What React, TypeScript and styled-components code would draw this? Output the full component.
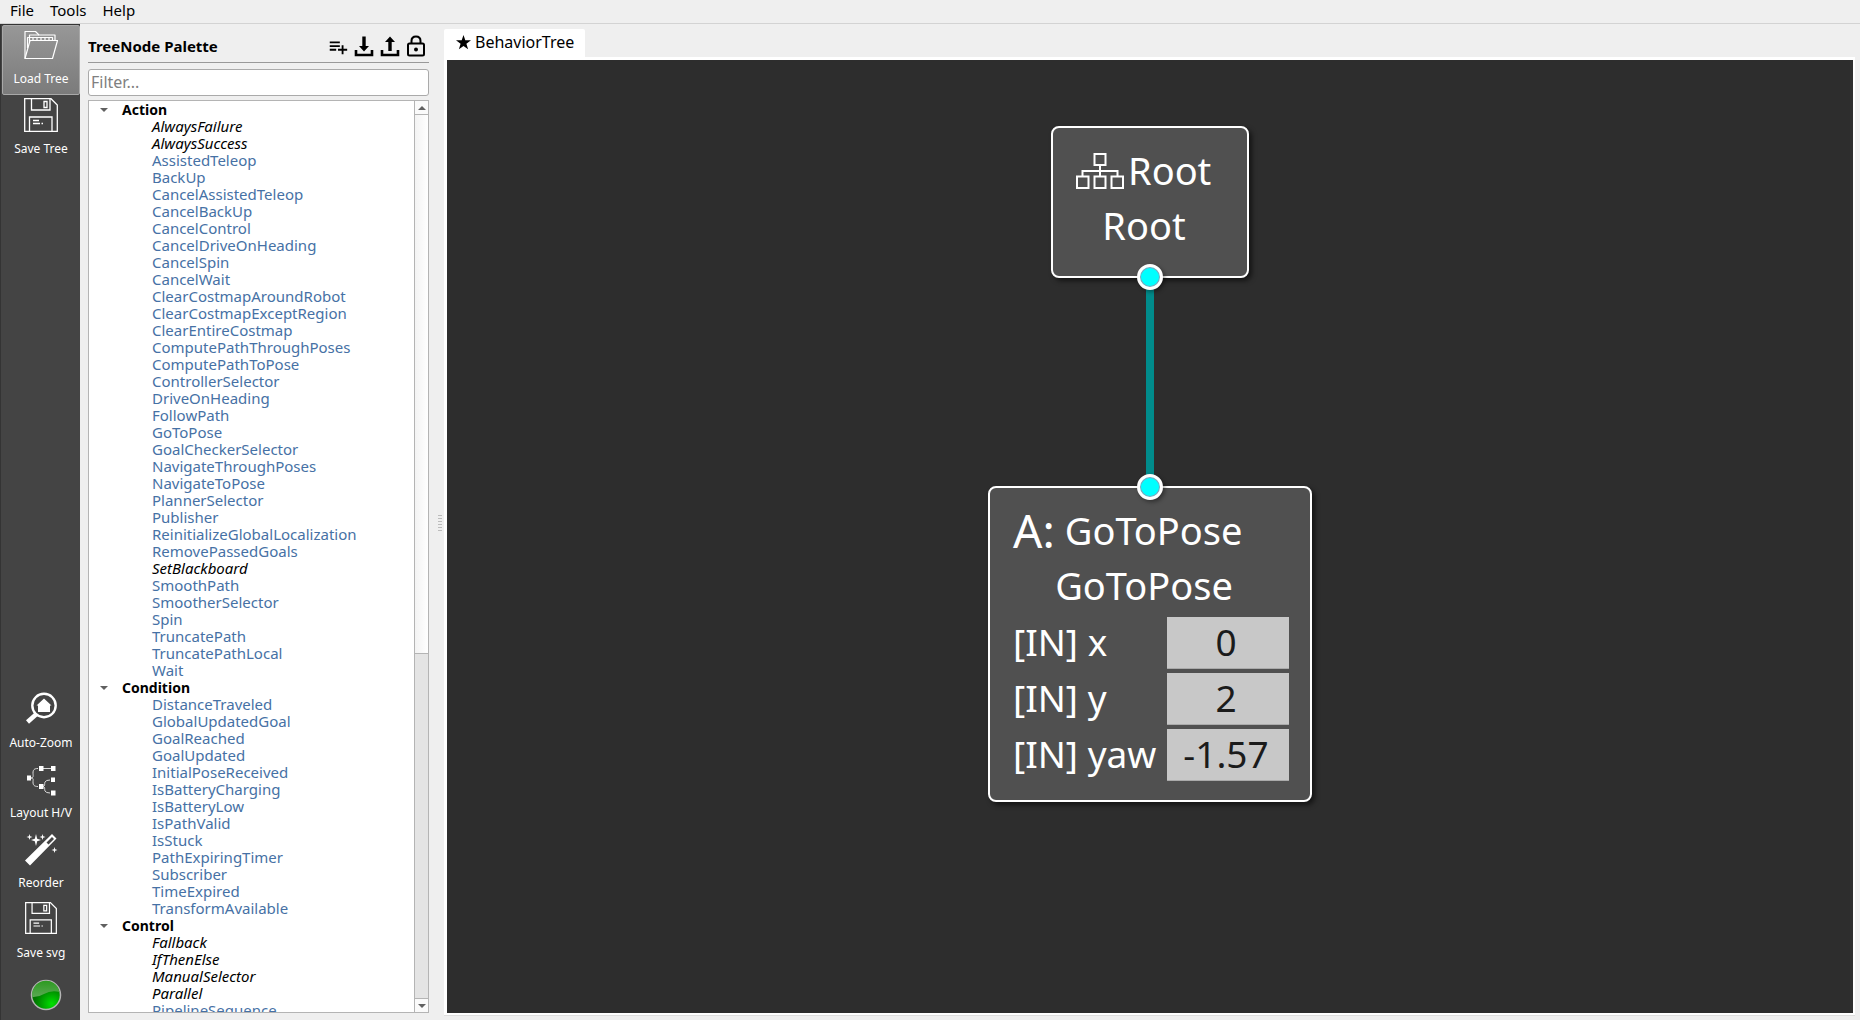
import React from "react";
import styled, { createGlobalStyle } from "styled-components";
import { MdPlaylistAdd } from "react-icons/md";

const GlobalStyle = createGlobalStyle`
  *, *::before, *::after { box-sizing: border-box; }
  body {
    margin: 0;
    background: #efefef;
    color: #000;
    font-family: "Noto Sans", "Open Sans", sans-serif;
    font-size: 15px;
  }
  button, input { font: inherit; color: inherit; }
  button { border: 0; padding: 0; background: none; }
  ul { list-style: none; margin: 0; padding: 0; }
`;

const Window = styled.div`
  display: flex;
  flex-direction: column;
  height: 100vh;
`;

const MenuBar = styled.nav`
  display: flex;
  gap: 16px;
  height: 24px;
  flex: none;
  padding: 0 10px 4px;
  border-bottom: 1px solid #d3d3d3;
`;

const MenuItem = styled.button`
  line-height: 20px;
`;

const Workspace = styled.div`
  display: flex;
  flex: 1;
  min-height: 0;
`;

const ToolBar = styled.aside`
  display: flex;
  flex-direction: column;
  width: 80px;
  flex: none;
  padding: 0 0 9px 1px;
  background: #444;
  border-left: 1px solid #343434;
  border-top: 1px solid #343434;
  color: #fff;
`;

const ToolButton = styled.button<{ $active?: boolean }>`
  display: flex;
  flex-direction: column;
  align-items: center;
  justify-content: space-between;
  height: 70px;
  flex: none;
  padding: 2px 0 7px;
  border: 1px solid ${(p) => (p.$active ? "#a8a8a8" : "transparent")};
  border-radius: 2px;
  background: ${(p) => (p.$active ? "linear-gradient(#979797, #7b7b7b)" : "none")};
  font-size: 12px;
  line-height: 16px;
`;

const ToolSpacer = styled.div`
  flex: 1;
`;

const StatusLed = styled.svg`
  display: block;
  flex: none;
  align-self: center;
  margin: 10px 0 0 10px;
`;

const Palette = styled.section`
  display: flex;
  flex-direction: column;
  width: 349px;
  flex: none;
  padding: 7px 0 7px 8px;
`;

const PaletteHeader = styled.header`
  display: flex;
  align-items: center;
  justify-content: space-between;
  height: 32px;
  flex: none;
  padding: 0 2px 2px 0;
  border-bottom: 1px solid #999;
`;

const PaletteTitle = styled.h1`
  margin: 0;
  font-size: 15px;
  line-height: 20px;
`;

const PaletteActions = styled.div`
  display: flex;
  gap: 4px;
`;

const IconButton = styled.button`
  display: flex;
  width: 22px;
  height: 22px;
`;

const Filter = styled.input`
  height: 27px;
  flex: none;
  margin: 6px 0 4px;
  padding: 0 2px 2px;
  border: 1px solid #aaa;
  border-radius: 3px;
  background: #fff;
  font-size: 16px;
  outline: none;
  &::placeholder { color: #808080; opacity: 1; }
`;

const TreeFrame = styled.div`
  display: flex;
  flex: 1;
  min-height: 0;
  border: 1px solid #b4b4b4;
  background: #fff;
`;

const TreeView = styled.ul`
  flex: 1;
  overflow: hidden;
`;

const Category = styled.button`
  display: flex;
  align-items: center;
  gap: 14px;
  width: 100%;
  height: 17px;
  padding-left: 11px;
  font-size: 14px;
  font-weight: 700;
  line-height: 17px;
`;

const TreeItem = styled.li<{ $builtin: boolean }>`
  height: 17px;
  padding-left: 63px;
  line-height: 17px;
  color: ${(p) => (p.$builtin ? "#000" : "#4671a5")};
  font-style: ${(p) => (p.$builtin ? "italic" : "normal")};
`;

const ScrollBar = styled.div`
  display: flex;
  flex-direction: column;
  width: 14px;
  flex: none;
  border-left: 1px solid #b4b4b4;
  background: #e4e4e4;
`;

const ScrollArrow = styled.button`
  display: flex;
  align-items: center;
  justify-content: center;
  height: 13px;
  flex: none;
  background: #fafafa;
`;

const ScrollThumb = styled.div`
  flex: 538;
  border: solid #b4b4b4;
  border-width: 1px 0;
  background: linear-gradient(90deg, #f3f3f3, #fff);
`;

const ScrollTrack = styled.div`
  flex: 344;
  border-bottom: 1px solid #b4b4b4;
`;

const Splitter = styled.div`
  display: flex;
  align-items: center;
  justify-content: flex-end;
  width: 15px;
  flex: none;
  padding-right: 2px;
`;

const SplitterGrip = styled.div`
  width: 4px;
  height: 17px;
  background: radial-gradient(circle, #bcbcbc 28%, transparent 30%) 0 0 / 2px 3px;
`;

const Editor = styled.main`
  display: flex;
  flex-direction: column;
  flex: 1;
  min-width: 0;
  padding: 5px 5px 5px 0;
`;

const Tab = styled.button`
  display: flex;
  align-items: center;
  align-self: flex-start;
  gap: 4px;
  height: 28px;
  flex: none;
  padding: 0 11px 2px 12px;
  border-radius: 2px 2px 0 0;
  background: #fff;
  font-size: 16px;
`;

const Canvas = styled.div`
  display: flex;
  flex-direction: column;
  align-items: center;
  flex: 1;
  min-height: 0;
  padding-top: 66px;
  border: solid #fff;
  border-width: 3px 2px 2px 3px;
  background: #2d2d2d;
  box-shadow: 0 1px 0 #dedede;
`;

const Node = styled.article`
  position: relative;
  display: flex;
  flex-direction: column;
  padding: 15px 21px 18px 23px;
  border: 2px solid #fff;
  border-radius: 8px;
  background: #505050;
  box-shadow: 3px 3px 5px rgba(0, 0, 0, 0.55);
  color: #fff;
  font-size: 38px;
  line-height: 55px;
`;

const RootNode = styled(Node)`
  width: 198px;
  height: 152px;
`;

const ActionNode = styled(Node)`
  width: 324px;
  height: 316px;
`;

const NodeTitle = styled.div<{ $gap: number }>`
  display: flex;
  align-items: center;
  gap: ${(p) => p.$gap}px;
  height: 55px;
`;

const NodePrefix = styled.span`
  font-size: 46px;
`;

const NodeName = styled.div`
  height: 55px;
  padding-right: 14px;
  text-align: center;
`;

const Port = styled.span<{ $side: "top" | "bottom" }>`
  position: absolute;
  z-index: 1;
  left: 50%;
  ${(p) => p.$side}: -14px;
  width: 26px;
  height: 26px;
  margin-left: -13px;
  border: 3px solid #fff;
  border-radius: 50%;
  background: #00ffff;
  box-shadow: inset 0 0 0 1px #8f9bb5, 2px 2px 4px rgba(0, 0, 0, 0.4);
`;

const Link = styled.div`
  width: 8px;
  height: 208px;
  flex: none;
  background: #008b8b;
`;

const Params = styled.div`
  display: flex;
  flex-direction: column;
  gap: 4px;
  padding-top: 4px;
  font-size: 37px;
`;

const Param = styled.div`
  display: flex;
  align-items: center;
  justify-content: space-between;
  height: 52px;
`;

const ParamLabel = styled.label`
  flex: none;
  padding-bottom: 4px;
  white-space: nowrap;
`;

const ParamInput = styled.input`
  width: 122px;
  height: 52px;
  padding: 0 4px 2px 0;
  border: 0;
  border-bottom: 1px solid #aaa;
  background: #c8c8c8;
  color: #1b1b1b;
  text-align: center;
  outline: none;
`;

const FolderIcon = () => (
  <svg width="34" height="34" viewBox="0 0 34 34" fill="none" stroke="#fff" strokeWidth="1.2" strokeLinejoin="round">
    <path d="M1 30.500V3.500H11.500L15 7H31V13" />
    <path d="M1 30.500L6 12.500H33.500L28.500 30.500Z" />
    <path d="M3.500 20V9.500H28.500V12M5.500 14V7H15" />
    <path d="M9 9.500V12M13 9.500V12M17 9.500V12M21 9.500V12M25 9.500V12" />
  </svg>
);

const FloppyIcon = ({ size }: { size: number }) => (
  <svg width={size} height={size} viewBox="0 0 34 34" fill="none" stroke="#fff" strokeWidth="1.300">
    <path d="M.7.7H27L33.300 7V33.300H.7Z" />
    <path d="M7.500.7V12H26V.7M20 3.500H23V9.500H20ZM5.500 33V19H28V33M9 22.500H15M9 25.500H16M17.500 25.500H19" />
  </svg>
);

const ZoomHomeIcon = () => (
  <svg width="32" height="34" viewBox="0 0 32 34">
    <circle cx="19" cy="13.500" r="11.700" fill="none" stroke="#fff" strokeWidth="2.400" />
    <path d="M11.500 22L2.500 30" stroke="#fff" strokeWidth="4.500" />
    <path d="M19 6.500L26.500 13.500H25V20H13V13.500H11.500Z" fill="#fff" />
  </svg>
);

const LayoutIcon = () => (
  <svg width="34" height="34" viewBox="0 0 34 34">
    <path
      d="M6 16H7C10 16 9 13 9 11C9 8 10 6.500 14 6.500M7 16C10 16 9 18 9 20C9 23 10 24.500 14 24.500M19 6.500H27M18 24.500C22 24.500 20 22 21 20Q22 18 26 18M18 24.500C22 24.500 20 27 21 29Q22 31 26 31"
      fill="none"
      stroke="#ddd"
    />
    <path d="M3 13.500H7V18.500H3ZM15 4H19.500V9H15ZM27 4H31.500V9H27ZM27 15.500H31V20H27ZM15 22H19.500V27H15ZM27 28.500H31.500V33.500H27Z" fill="#fff" />
  </svg>
);

const WandIcon = () => (
  <svg width="34" height="34" viewBox="0 0 34 34" fill="#fff">
    <path d="M1 28.500L28 2L32.500 6.500L6 33.500ZM22.500 10.500L24.500 12.500L30 7L28 5Z" fillRule="evenodd" />
    <path d="M12 2L13.200 6.800L17 8L13.200 9.200L12 14L10.800 9.200L7 8L10.800 6.800ZM5.500 2L6.200 4.300L8.500 5L6.200 5.700L5.500 8L4.800 5.700L2.500 5L4.800 4.300ZM18.500 2L19.200 4.300L21.500 5L19.200 5.700L18.500 8L17.800 5.700L15.500 5L17.800 4.300ZM30.500 15L31.200 17.300L33.500 18L31.200 18.700L30.500 21L29.800 18.700L27.500 18L29.800 17.300Z" />
  </svg>
);

const TransferIcon = ({ up }: { up?: boolean }) => (
  <svg width="22" height="22" viewBox="0 0 22 22">
    <path d="M3 15V20H19V15" fill="none" stroke="#000" strokeWidth="2.600" />
    <path d={up ? "M11 1.500L16 7H12.700V16H9.300V7H6Z" : "M11 16.500L16 11H12.700V1.500H9.300V11H6Z"} />
  </svg>
);

const LockIcon = () => (
  <svg width="22" height="22" viewBox="0 0 22 22" fill="none" stroke="#000" strokeWidth="2">
    <rect x="3" y="8.500" width="16" height="12" rx="1.500" />
    <path d="M6.500 8.500V6Q6.500 1.500 11 1.500T15.500 6V8.500" />
    <circle cx="11" cy="14.500" r="2" fill="#000" stroke="none" />
  </svg>
);

const Triangle = ({ up }: { up?: boolean }) => (
  <svg width="8" height="4" viewBox="0 0 8 4" fill="#606060">
    <path d={up ? "M0 4L4 0L8 4Z" : "M0 0H8L4 4Z"} />
  </svg>
);

const StarIcon = () => (
  <svg width="15" height="15" viewBox="0 0 15 15">
    <path d="M7.500 0L9.300 5.300H15L10.400 8.700L12.100 14.300L7.500 10.900L2.900 14.300L4.600 8.700L0 5.300H5.700Z" />
  </svg>
);

const HierarchyIcon = () => (
  <svg width="48" height="36" viewBox="0 0 48 36" fill="none" stroke="#fff" strokeWidth="2">
    <path d="M18.500 1H29.500V12H18.500ZM1 23.500H12.500V35H1ZM18.500 23.500H29.500V35H18.500ZM35.500 23.500H47V35H35.500ZM24 12V23.500M6.500 23.500V18H41.500V23.500" />
  </svg>
);

const builtins = new Set([
  "AlwaysFailure", "AlwaysSuccess", "SetBlackboard", "Fallback", "IfThenElse", "ManualSelector", "Parallel",
]);

const categories = [
  {
    name: "Action",
    items: [
      "AlwaysFailure", "AlwaysSuccess", "AssistedTeleop", "BackUp", "CancelAssistedTeleop", "CancelBackUp",
      "CancelControl", "CancelDriveOnHeading", "CancelSpin", "CancelWait", "ClearCostmapAroundRobot",
      "ClearCostmapExceptRegion", "ClearEntireCostmap", "ComputePathThroughPoses", "ComputePathToPose",
      "ControllerSelector", "DriveOnHeading", "FollowPath", "GoToPose", "GoalCheckerSelector",
      "NavigateThroughPoses", "NavigateToPose", "PlannerSelector", "Publisher",
      "ReinitializeGlobalLocalization", "RemovePassedGoals", "SetBlackboard", "SmoothPath",
      "SmootherSelector", "Spin", "TruncatePath", "TruncatePathLocal", "Wait",
    ],
  },
  {
    name: "Condition",
    items: [
      "DistanceTraveled", "GlobalUpdatedGoal", "GoalReached", "GoalUpdated", "InitialPoseReceived",
      "IsBatteryCharging", "IsBatteryLow", "IsPathValid", "IsStuck", "PathExpiringTimer", "Subscriber",
      "TimeExpired", "TransformAvailable",
    ],
  },
  { name: "Control", items: ["Fallback", "IfThenElse", "ManualSelector", "Parallel", "PipelineSequence"] },
];

const params = [
  { name: "x", value: "0" },
  { name: "y", value: "2" },
  { name: "yaw", value: "-1.57" },
];

export default function App() {
  return (
    <>
      <GlobalStyle />
      <Window>
        <MenuBar>
          <MenuItem>File</MenuItem>
          <MenuItem>Tools</MenuItem>
          <MenuItem>Help</MenuItem>
        </MenuBar>
        <Workspace>
          <ToolBar>
            <ToolButton $active><FolderIcon />Load Tree</ToolButton>
            <ToolButton><FloppyIcon size={34} />Save Tree</ToolButton>
            <ToolSpacer />
            <ToolButton><ZoomHomeIcon />Auto-Zoom</ToolButton>
            <ToolButton><LayoutIcon />Layout H/V</ToolButton>
            <ToolButton><WandIcon />Reorder</ToolButton>
            <ToolButton><FloppyIcon size={32} />Save svg</ToolButton>
            <StatusLed width="32" height="32" viewBox="0 0 32 32">
              <defs>
                <radialGradient id="led" cx="0.7" cy="0.8" r="0.6">
                  <stop offset="0" stopColor="#00e000" />
                  <stop offset="1" stopColor="#007400" />
                </radialGradient>
                <linearGradient id="shine" x1="0" y1="0" x2="0" y2="1">
                  <stop offset="0" stopColor="#2c9a20" />
                  <stop offset="1" stopColor="#5aa953" />
                </linearGradient>
              </defs>
              <circle cx="16" cy="16" r="14.500" fill="url(#led)" stroke="#b5b5b5" strokeWidth="1.500" />
              <path d="M2.300 18A13.800 13.800 0 0 1 29.500 13Q21 11 14 15Q8 18.500 2.300 18Z" fill="url(#shine)" />
            </StatusLed>
          </ToolBar>
          <Palette>
            <PaletteHeader>
              <PaletteTitle>TreeNode Palette</PaletteTitle>
              <PaletteActions>
                <IconButton aria-label="Add node"><MdPlaylistAdd size={24} /></IconButton>
                <IconButton aria-label="Import palette"><TransferIcon /></IconButton>
                <IconButton aria-label="Export palette"><TransferIcon up /></IconButton>
                <IconButton aria-label="Lock"><LockIcon /></IconButton>
              </PaletteActions>
            </PaletteHeader>
            <Filter type="text" aria-label="Filter" placeholder="Filter..." />
            <TreeFrame>
              <TreeView>
                {categories.map((category) => (
                  <li key={category.name}>
                    <Category><Triangle />{category.name}</Category>
                    <ul>
                      {category.items.map((item) => (
                        <TreeItem key={item} $builtin={builtins.has(item)}>{item}</TreeItem>
                      ))}
                    </ul>
                  </li>
                ))}
              </TreeView>
              <ScrollBar>
                <ScrollArrow aria-label="Scroll up"><Triangle up /></ScrollArrow>
                <ScrollThumb />
                <ScrollTrack />
                <ScrollArrow aria-label="Scroll down"><Triangle /></ScrollArrow>
              </ScrollBar>
            </TreeFrame>
          </Palette>
          <Splitter><SplitterGrip /></Splitter>
          <Editor>
            <Tab><StarIcon />BehaviorTree</Tab>
            <Canvas>
              <RootNode>
                <NodeTitle $gap={4}><HierarchyIcon />Root</NodeTitle>
                <NodeName>Root</NodeName>
                <Port $side="bottom" />
              </RootNode>
              <Link />
              <ActionNode>
                <Port $side="top" />
                <NodeTitle $gap={10}><NodePrefix>A:</NodePrefix>GoToPose</NodeTitle>
                <NodeName>GoToPose</NodeName>
                <Params>
                  {params.map((param) => (
                    <Param key={param.name}>
                      <ParamLabel htmlFor={`port-${param.name}`}>[IN] {param.name}</ParamLabel>
                      <ParamInput id={`port-${param.name}`} type="text" defaultValue={param.value} />
                    </Param>
                  ))}
                </Params>
              </ActionNode>
            </Canvas>
          </Editor>
        </Workspace>
      </Window>
    </>
  );
}
